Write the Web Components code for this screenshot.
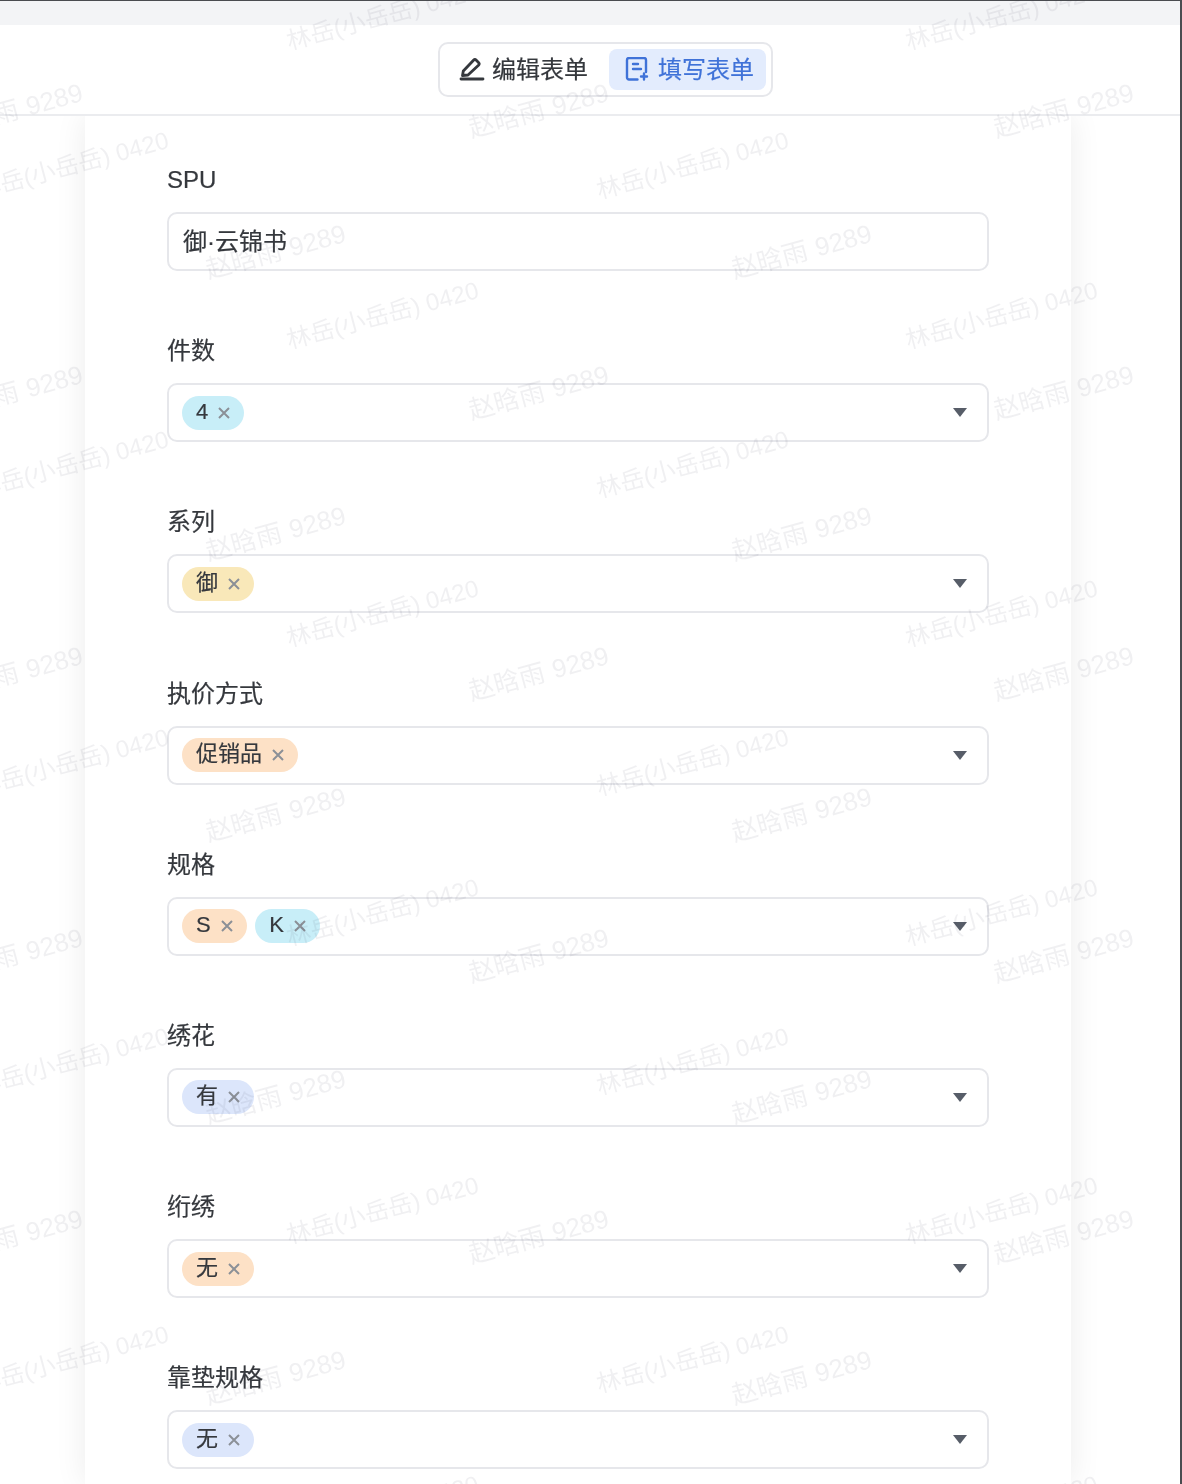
<!DOCTYPE html>
<html lang="zh">
<head>
<meta charset="utf-8">
<title>填写表单</title>
<style>
  html, body { margin: 0; padding: 0; background: #fff; }
  body {
    color: #35383d;
    font-family: "Liberation Sans", "Noto Sans CJK SC", sans-serif;
    height: 1484px;
    overflow: hidden;
    -webkit-text-stroke: 0.2px;
  }
</style>
</head>
<body>
<form-app>
  <mode-switch slot="header"></mode-switch>
  <form-field label="SPU" value="御·云锦书"></form-field>
  <form-field label="件数" select><form-tag color="cyan">4</form-tag></form-field>
  <form-field label="系列" select><form-tag color="yellow">御</form-tag></form-field>
  <form-field label="执价方式" select><form-tag color="orange">促销品</form-tag></form-field>
  <form-field label="规格" select><form-tag color="orange">S</form-tag><form-tag color="cyan">K</form-tag></form-field>
  <form-field label="绣花" select><form-tag color="blue">有</form-tag></form-field>
  <form-field label="绗绣" select><form-tag color="orange">无</form-tag></form-field>
  <form-field label="靠垫规格" select><form-tag color="blue">无</form-tag></form-field>
</form-app>
<water-mark></water-mark>

<script>
class FormApp extends HTMLElement {
  constructor() {
    super();
    this.attachShadow( {mode: 'open'} );
    this.shadowRoot.innerHTML = /* template */ `
      <style>
        :host {
          background: #fff;
          border-right: solid 2px #4a4c50;
          border-top: solid 1px #4a4c50;
          box-sizing: border-box;
          display: flex;
          filter: blur( 0.5px );
          flex-direction: column;
          height: 1484px;
          overflow: hidden;
        }
        .strip {
          background: #f3f4f6;
          flex: none;
          height: 24px;
        }
        header {
          align-items: flex-start;
          background: #fff;
          border-bottom: solid 2px #ebecef;
          box-sizing: border-box;
          display: flex;
          flex: none;
          height: 91px;
          justify-content: center;
          padding: 17px 0 0 31px;
          position: relative;
          z-index: 1;
        }
        main {
          flex: 1;
          min-height: 0;
          padding-left: 85px;
        }
        .card {
          background: #fff;
          box-shadow: 0 0 30px rgba( 0, 0, 0, 0.08 );
          box-sizing: border-box;
          height: 100%;
          padding: 48px 82px 0;
          width: 986px;
        }
      </style>
      <div class="strip"></div>
      <header><slot name="header"></slot></header>
      <main><div class="card"><slot></slot></div></main>
    `;
  }
}

class ModeSwitch extends HTMLElement {
  constructor() {
    super();
    this.attachShadow( {mode: 'open'} );
    this.shadowRoot.innerHTML = /* template */ `
      <style>
        :host {
          background: #fff;
          border: solid 2px #e6e7eb;
          border-radius: 10px;
          box-sizing: border-box;
          display: flex;
          gap: 6px;
          height: 55px;
          padding: 5px;
          width: 335px;
        }
        div {
          align-items: center;
          border-radius: 8px;
          box-sizing: border-box;
          display: flex;
          flex: none;
          font-size: 24px;
          gap: 7px;
          height: 41px;
          line-height: 32px;
          white-space: nowrap;
        }
        .edit {
          color: #35383d;
          padding-left: 14px;
          width: 158px;
        }
        .fill {
          background: #e3ecfd;
          color: #3f72d8;
          padding-left: 16px;
          width: 157px;
        }
        svg { flex: none; }
      </style>
      <div class="edit">
        <svg width="26" height="26" viewBox="0 0 26 26" fill="none" stroke="currentColor" stroke-width="2.8" stroke-linejoin="round" stroke-linecap="round">
          <path d="M3.5 18.5l.8-4.5L14.5 3.2a2 2 0 0 1 2.8 0l2.2 2.2a2 2 0 0 1 0 2.8L9 18z"/>
          <path d="M2 22h22"/>
        </svg>
        <span>编辑表单</span>
      </div>
      <div class="fill">
        <svg width="26" height="26" viewBox="0 0 26 26" fill="none" stroke="currentColor" stroke-width="2.4" stroke-linejoin="round" stroke-linecap="round">
          <path d="M12.5 22.5H4a2 2 0 0 1-2-2V3a2 2 0 0 1 2-2h15a2 2 0 0 1 2 2v12"/>
          <path d="M8 7h5M8 12h8"/>
          <path d="M19 16.5v6M16 19.5h6"/>
        </svg>
        <span>填写表单</span>
      </div>
    `;
  }
}

class FormField extends HTMLElement {
  constructor() {
    super();
    this.attachShadow( {mode: 'open'} );
    this.shadowRoot.innerHTML = /* template */ `
      <style>
        :host {
          display: block;
          margin-bottom: 64.2px;
        }
        label {
          display: block;
          font-size: 24px;
          line-height: 32px;
          margin-bottom: 16px;
        }
        .box {
          align-items: center;
          background: #fff;
          border: solid 2px #e6e7eb;
          border-radius: 10px;
          box-sizing: border-box;
          display: flex;
          font-size: 24px;
          gap: 8.5px;
          height: 59px;
          line-height: 32px;
          padding: 0 20px 0 13px;
          width: 822px;
        }
        .value { margin-left: 1px; }
        .caret {
          border-left: solid 7px transparent;
          border-right: solid 7px transparent;
          border-top: solid 9px #575d68;
          margin-left: auto;
        }
        :host( :not( [select] ) ) .caret { display: none; }
      </style>
      <label></label>
      <div class="box">
        <span class="value"></span>
        <slot></slot>
        <span class="caret"></span>
      </div>
    `;

    this.$label = this.shadowRoot.querySelector( 'label' );
    this.$value = this.shadowRoot.querySelector( '.value' );
  }

  connectedCallback() {
    this.$label.textContent = this.getAttribute( 'label' );

    if( this.hasAttribute( 'value' ) ) {
      this.$value.textContent = this.getAttribute( 'value' );
    } else {
      this.$value.remove();
    }
  }
}

class FormTag extends HTMLElement {
  constructor() {
    super();
    this.attachShadow( {mode: 'open'} );
    this.shadowRoot.innerHTML = /* template */ `
      <style>
        :host {
          align-items: center;
          background: #dce6fb;
          border-radius: 17px;
          box-sizing: border-box;
          color: #35383d;
          display: inline-flex;
          font-size: 22px;
          gap: 9px;
          height: 34px;
          line-height: 30px;
          padding: 0 13px 0 14px;
        }
        :host( [color=cyan] ) { background: #c8eef8; }
        :host( [color=yellow] ) { background: #f9e8b9; }
        :host( [color=orange] ) { background: #fde1c6; }
        span { margin-bottom: 2px; }
        svg { flex: none; }
      </style>
      <span><slot></slot></span>
      <svg width="14" height="14" viewBox="0 0 14 14" fill="none" stroke="#8b9097" stroke-width="2">
        <path d="M2 2l10 10M12 2L2 12"/>
      </svg>
    `;
  }
}

// Tiled watermark, lies over the whole page
class WaterMark extends HTMLElement {
  constructor() {
    super();
    this.attachShadow( {mode: 'open'} );
    this.shadowRoot.innerHTML = /* template */ `
      <style>
        :host {
          filter: blur( 0.5px );
          height: 1484px;
          left: 0;
          overflow: hidden;
          pointer-events: none;
          position: absolute;
          top: 0;
          width: 1182px;
          z-index: 5;
          -webkit-text-stroke: 0;
        }
        span {
          color: rgba( 60, 70, 90, 0.08 );
          font-size: 24.2px;
          position: absolute;
          transform: translate( -50%, -50% ) rotate( -15deg );
          white-space: nowrap;
        }
        .wide {
          font-size: 26px;
          word-spacing: 1px;
        }
      </style>
    `;
  }

  _add( text, x, y, name ) {
    const span = document.createElement( 'span' );
    span.textContent = text;
    span.style.left = `${x}px`;
    span.style.top = `${y}px`;
    if( name ) span.className = name;
    this.shadowRoot.appendChild( span );
  }

  connectedCallback() {
    for( let row = 0; row < 6; row++ ) {
      const y = 14 + row * 298.5;
      this._add( '林岳(小岳岳) 0420', 382, y );
      this._add( '林岳(小岳岳) 0420', 1001, y );
      this._add( '林岳(小岳岳) 0420', 72, y + 149 );
      this._add( '林岳(小岳岳) 0420', 692, y + 149 );
    }

    for( let row = 0; row < 6; row++ ) {
      const y = 108 + row * 281.5;
      this._add( '赵晗雨 9289', 12, y, 'wide' );
      this._add( '赵晗雨 9289', 538, y, 'wide' );
      this._add( '赵晗雨 9289', 1063, y, 'wide' );
      this._add( '赵晗雨 9289', 275, y + 141, 'wide' );
      this._add( '赵晗雨 9289', 801, y + 141, 'wide' );
    }
  }
}

window.customElements.define( 'form-app', FormApp );
window.customElements.define( 'mode-switch', ModeSwitch );
window.customElements.define( 'form-field', FormField );
window.customElements.define( 'form-tag', FormTag );
window.customElements.define( 'water-mark', WaterMark );
</script>
</body>
</html>
